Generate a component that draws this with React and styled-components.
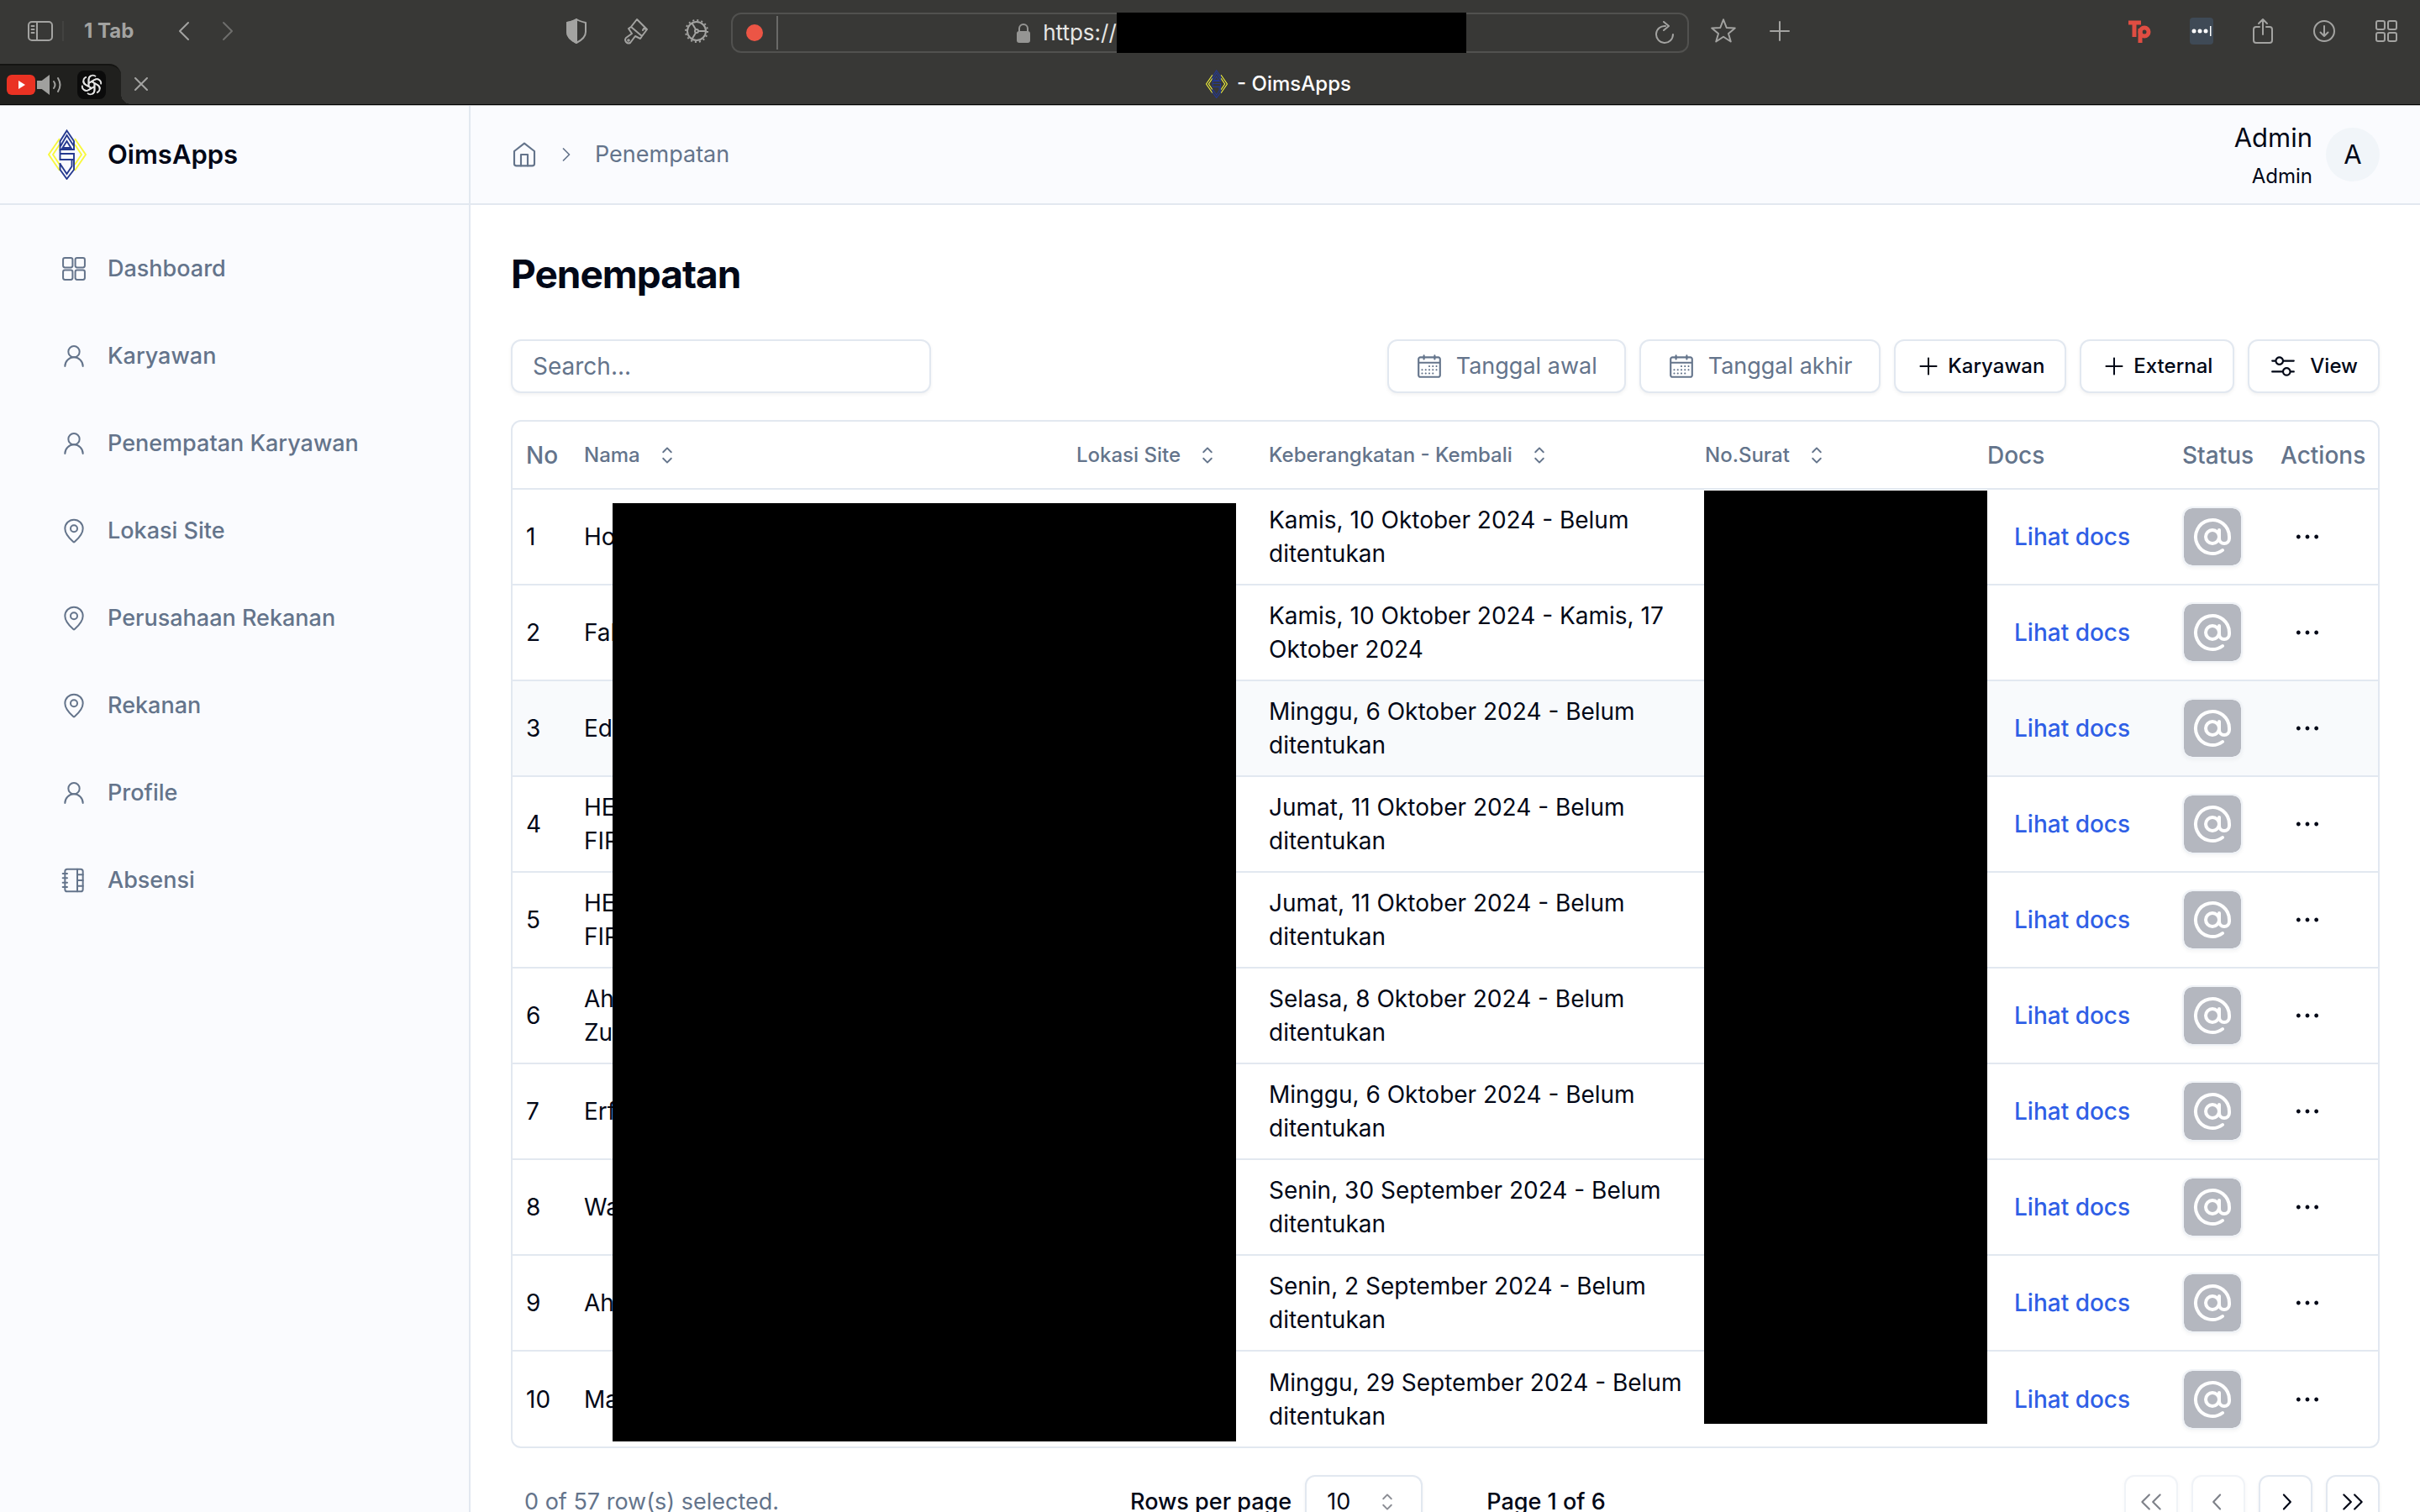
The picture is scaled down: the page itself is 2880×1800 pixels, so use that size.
import React from 'react';
import styled, { createGlobalStyle, css } from 'styled-components';
import { UserRound, MapPin, NotebookTabs, AtSign, ChevronRight } from 'lucide-react';
import {
  RxPlus, RxMixerHorizontal, RxCaretSort, RxCalendar, RxDotsHorizontal,
  RxChevronLeft, RxChevronRight, RxDoubleArrowLeft, RxDoubleArrowRight,
} from 'react-icons/rx';

const INK = '#020817';
const MUTED = '#64748b';
const LINE = '#e2e8f0';
const SURFACE = '#fafbfe';
const CHROME = '#383836';

const GlobalStyle = createGlobalStyle`
  *, *::before, *::after { box-sizing: border-box; }
  html, body { margin: 0; height: 100%; }
  #root { height: 100%; }
  body {
    overflow: hidden;
    background: #fff;
    color: ${INK};
    font: 400 28px/40px Inter, "Liberation Sans", sans-serif;
  }
  button, input, select { font: inherit; color: inherit; }
  button { cursor: pointer; }
  svg { display: block; flex: none; }
`;

const Screen = styled.div`
  display: flex;
  flex-direction: column;
  height: 100vh;
  overflow: hidden;
`;

/* Browser chrome */
const Chrome = styled.header`
  flex: none;
  background: ${CHROME};
  color: #a3a3a1;
  border-bottom: 1px solid #000;
`;
const Toolbar = styled.div`
  display: grid;
  grid-template-columns: 866px 1fr 870px;
  align-items: start;
  height: 76px;
`;
const ToolGroup = styled.div`
  display: flex;
  align-items: center;
  height: 74px;
  padding: ${(p) => p.$pad || '0'};
  gap: ${(p) => p.$gap || 0}px;
`;
const Spacer = styled.div`
  flex: 1;
`;
const ChromeButton = styled.button`
  display: flex;
  align-items: center;
  justify-content: center;
  padding: 0;
  border: 0;
  background: none;
  color: ${(p) => (p.$dim ? '#6e6e6c' : '#a3a3a1')};
`;
const TabCount = styled.span`
  margin-left: 10px;
  padding-left: 24px;
  border-left: 2px solid #424240;
  line-height: 24px;
  font-size: 24px;
  font-weight: 700;
`;
const AddressBar = styled.div`
  display: flex;
  align-items: center;
  height: 48px;
  margin: 15px 0 0 4px;
  padding: 0 14px 0 16px;
  border: 2px solid #51514f;
  border-radius: 12px;
`;
const RecordDot = styled.span`
  width: 20px;
  height: 20px;
  border-radius: 50%;
  background: #ec5545;
`;
const BarDivider = styled.span`
  width: 2px;
  height: 40px;
  margin-left: 16px;
  background: #6a6a68;
`;
const Address = styled.div`
  flex: 1;
  display: flex;
  align-items: center;
  justify-content: center;
  gap: 14px;
  height: 44px;
  padding-left: 60px;
  color: #e6e6e4;
  font-size: 26px;
`;
const Url = styled.div`
  display: flex;
  align-items: center;
`;
const UrlMask = styled.span`
  width: 416px;
  height: 48px;
  background: #000;
`;
const TabStrip = styled.div`
  display: flex;
  align-items: stretch;
  height: 48px;
`;
const PinnedTabs = styled.div`
  position: relative;
  display: flex;
  align-items: center;
  gap: 2px;
  width: 144px;
  padding-left: 8px;
  border-top: 2px solid #141412;
  border-radius: 0 14px 0 0;
  background: #20201e;
  &::after {
    content: '';
    position: absolute;
    left: 100%;
    bottom: 0;
    width: 12px;
    height: 12px;
    background: radial-gradient(circle at 100% 0, transparent 12px, #20201e 12px);
  }
`;
const GptTile = styled.span`
  display: grid;
  place-items: center;
  width: 34px;
  height: 34px;
  margin-left: 16px;
  border-radius: 8px;
  background: #0b0b0b;
  color: #e4e4e4;
`;
const ActiveTab = styled.div`
  flex: 1;
  display: grid;
  grid-template-columns: 48px 1fr 32px;
  align-items: center;
  color: #fff;
`;
const TabTitle = styled.div`
  display: flex;
  align-items: center;
  justify-content: center;
  gap: 8px;
  line-height: 32px;
  font-size: 24px;
  font-weight: 500;
`;

/* App shell */
const Shell = styled.div`
  flex: 1;
  display: grid;
  grid-template-columns: 560px minmax(0, 1fr);
  grid-template-rows: 118px minmax(0, 1fr);
  min-height: 0;
  border-top: 1px solid #b8b9ba;
`;
const Brand = styled.div`
  display: flex;
  align-items: center;
  gap: 24px;
  padding-left: 56px;
  border-right: 2px solid ${LINE};
  border-bottom: 2px solid ${LINE};
  background: ${SURFACE};
  font-size: 31px;
  font-weight: 600;
`;
const TopBar = styled.div`
  display: flex;
  align-items: center;
  justify-content: space-between;
  padding: 0 48px;
  border-bottom: 2px solid ${LINE};
  background: ${SURFACE};
`;
const Crumbs = styled.nav`
  display: flex;
  align-items: center;
  gap: 20px;
  color: ${MUTED};
  font-size: 27px;
`;
const CrumbLink = styled.a`
  color: inherit;
  text-decoration: none;
`;
const Account = styled.div`
  display: flex;
  align-items: center;
  gap: 16px;
`;
const AccountText = styled.div`
  display: flex;
  flex-direction: column;
  align-items: flex-end;
  gap: 8px;
`;
const AccountName = styled.span`
  font-size: 31px;
  line-height: 44px;
`;
const AccountRole = styled.span`
  font-size: 24px;
  line-height: 32px;
`;
const Avatar = styled.span`
  display: grid;
  place-items: center;
  width: 64px;
  height: 64px;
  border-radius: 50%;
  background: #f1f5f9;
  font-size: 31px;
`;
const Sidebar = styled.nav`
  display: flex;
  flex-direction: column;
  gap: 40px;
  padding: 44px 72px;
  border-right: 2px solid ${LINE};
  background: ${SURFACE};
`;
const SideLink = styled.a`
  display: flex;
  align-items: center;
  gap: 24px;
  height: 64px;
  color: ${MUTED};
  font-size: 27px;
  font-weight: 500;
  text-decoration: none;
`;

/* Page */
const Page = styled.main`
  min-width: 0;
  padding: 54px 48px 0;
`;
const Title = styled.h1`
  margin: 0 0 50px;
  font-size: 46px;
  line-height: 56px;
  font-weight: 700;
  letter-spacing: -1px;
`;
const Controls = styled.div`
  display: flex;
  justify-content: space-between;
  margin-bottom: 32px;
`;
const Actions = styled.div`
  display: flex;
  gap: 16px;
`;
const fieldBox = css`
  height: 64px;
  border: 2px solid ${LINE};
  border-radius: 12px;
  background: #fff;
  box-shadow: 0 2px 4px rgba(0, 0, 0, 0.05);
`;
const Search = styled.input`
  ${fieldBox}
  width: 500px;
  padding: 0 24px;
  outline: 0;
  &::placeholder { color: ${MUTED}; opacity: 1; }
`;
const ActionButton = styled.button`
  ${fieldBox}
  display: flex;
  align-items: center;
  gap: ${(p) => (p.$wide ? 16 : 8)}px;
  padding: 0 ${(p) => (p.$date ? 32 : 24)}px;
  color: ${(p) => (p.$date ? MUTED : INK)};
  font-size: ${(p) => (p.$date ? 27 : 24)}px;
  font-weight: ${(p) => (p.$date ? 400 : 500)};
`;
const TableFrame = styled.div`
  position: relative;
  overflow: hidden;
  border: 2px solid ${LINE};
  border-radius: 12px;
`;
const Table = styled.table`
  width: 100%;
  border-collapse: collapse;
  table-layout: fixed;
`;
const Col = styled.col`
  width: ${(p) => (p.$w ? `${p.$w}px` : 'auto')};
`;
const HeadCell = styled.th`
  height: 80px;
  padding: 0 0 0 16px;
  color: ${MUTED};
  font-weight: 500;
  text-align: left;
  white-space: nowrap;
`;
const SortButton = styled.button`
  display: flex;
  align-items: center;
  gap: 16px;
  padding: 0;
  border: 0;
  background: none;
  font-size: 24px;
  font-weight: 500;
`;
const Row = styled.tr`
  border-top: 2px solid ${LINE};
  background: ${(p) => (p.$hover ? '#f8fafc' : 'transparent')};
`;
const Cell = styled.td`
  height: 114px;
  padding: 0 0 0 16px;
`;
const NameText = styled.div`
  white-space: pre-line;
`;
const DocLink = styled.a`
  padding-left: 32px;
  color: #2f5fe6;
  font-weight: 500;
  text-decoration: none;
`;
const StatusBadge = styled.button`
  display: grid;
  place-items: center;
  width: 72px;
  height: 72px;
  padding: 0;
  border: 2px solid #f0f3f7;
  border-radius: 12px;
  background: #b4b7bf padding-box;
  color: #fff;
  box-shadow: 0 2px 4px rgba(0, 0, 0, 0.04);
`;
const RowMenu = styled.button`
  display: grid;
  place-items: center;
  width: 64px;
  height: 64px;
  padding: 0;
  border: 0;
  background: none;
`;
const Redaction = styled.div`
  position: absolute;
  top: ${(p) => p.$top}px;
  bottom: ${(p) => p.$bottom}px;
  left: ${(p) => p.$left}px;
  width: ${(p) => p.$width}px;
  background: #000;
`;

/* Pagination */
const Pager = styled.footer`
  display: grid;
  grid-template-columns: 737px 1fr auto;
  align-items: center;
  height: 64px;
  margin-top: 32px;
  font-size: 27px;
`;
const Selected = styled.span`
  padding-left: 16px;
  color: ${MUTED};
`;
const PageSize = styled.div`
  display: flex;
  align-items: center;
  gap: 16px;
  font-weight: 500;
`;
const SelectBox = styled.div`
  ${fieldBox}
  display: grid;
  grid-template-columns: 1fr auto;
  align-items: center;
  width: 140px;
  padding: 0 24px;
  font-weight: 400;
  svg, select { grid-row: 1; }
  svg { grid-column: 2; color: #8b8d94; pointer-events: none; }
  select {
    grid-column: 1 / 3;
    appearance: none;
    border: 0;
    padding: 0;
    background: none;
    outline: 0;
  }
`;
const PageInfo = styled.span`
  padding-left: 60px;
`;
const PageButtons = styled.div`
  display: flex;
  gap: 16px;
`;
const PageButton = styled.button`
  ${fieldBox}
  display: grid;
  place-items: center;
  width: 64px;
  padding: 0;
  &:disabled { opacity: 0.5; color: ${INK}; }
`;

const Line = ({ w = 32, h = w, box = '0 0 24 24', sw = 1.6, children }) => (
  <svg width={w} height={h} viewBox={box} fill="none" stroke="currentColor" strokeWidth={sw} strokeLinecap="round" strokeLinejoin="round">
    {children}
  </svg>
);

const Logo = ({ width, height }) => (
  <svg width={width} height={height} viewBox="0 0 46 60" fill="none" strokeWidth="1.900">
    <g stroke="#f8f83c">
      <path d="M14 11 1 30l13 19M14 18 6 30l8 12M32 11l13 19-13 19M32 18l8 12-8 12" />
    </g>
    <g stroke="#25398f">
      <path d="M22.500 1.500 14.500 14v10H31V14zM15 20l7.500-13L31 20M17.500 22l5-8 5 8z" />
      <path d="M14.500 24v5H31v19l-8.500 11-8-11v-8M14.500 29v7H31M14.500 41l8 12 6-9v-7" />
    </g>
  </svg>
);

const House = () => (
  <Line sw={1.6}>
    <path d="m3 9 9-7 9 7v11a2 2 0 0 1-2 2H5a2 2 0 0 1-2-2z" />
    <path d="M9 22V12h6v10" />
  </Line>
);

const Grid = ({ size, strokeWidth }) => (
  <Line w={size} sw={strokeWidth}>
    <rect x="2.300" y="2.300" width="8.500" height="8.500" rx="1.600" />
    <rect x="13.200" y="2.300" width="8.500" height="8.500" rx="1.600" />
    <rect x="2.300" y="13.200" width="8.500" height="8.500" rx="1.600" />
    <rect x="13.200" y="13.200" width="8.500" height="8.500" rx="1.600" />
  </Line>
);

const MENU = [
  ['Dashboard', Grid], ['Karyawan', UserRound], ['Penempatan Karyawan', UserRound],
  ['Lokasi Site', MapPin], ['Perusahaan Rekanan', MapPin], ['Rekanan', MapPin],
  ['Profile', UserRound], ['Absensi', NotebookTabs],
];

const ROWS = [
  ['Ho', 'Kamis, 10 Oktober 2024 - Belum ditentukan'],
  ['Fah', 'Kamis, 10 Oktober 2024 - Kamis, 17 Oktober 2024'],
  ['Ed', 'Minggu, 6 Oktober 2024 - Belum ditentukan'],
  ['HE\nFIR', 'Jumat, 11 Oktober 2024 - Belum ditentukan'],
  ['HE\nFIR', 'Jumat, 11 Oktober 2024 - Belum ditentukan'],
  ['Ah\nZu', 'Selasa, 8 Oktober 2024 - Belum ditentukan'],
  ['Erf', 'Minggu, 6 Oktober 2024 - Belum ditentukan'],
  ['Wa', 'Senin, 30 September 2024 - Belum ditentukan'],
  ['Ah', 'Senin, 2 September 2024 - Belum ditentukan'],
  ['Ma', 'Minggu, 29 September 2024 - Belum ditentukan'],
];

const SortHead = ({ children }) => (
  <HeadCell>
    <SortButton>{children}<RxCaretSort size={32} /></SortButton>
  </HeadCell>
);

const BrowserChrome = () => (
  <Chrome>
    <Toolbar>
      <ToolGroup $pad="0 22px 0 32px">
        <ChromeButton aria-label="Sidebar">
          <Line w={32} h={26} box="0 0 32 26" sw={2}>
            <rect x="2" y="2" width="28" height="22" rx="4" /><path d="M12 2v22M5.500 7h3M5.500 11h3M5.500 15h3" />
          </Line>
        </ChromeButton>
        <TabCount>1 Tab</TabCount>
        <ToolGroup $pad="0 0 0 52px" $gap={36}>
          <ChromeButton aria-label="Back"><Line w={16} h={24} box="0 0 16 24" sw={2}><path d="M13 2 3 12l10 10" /></Line></ChromeButton>
          <ChromeButton aria-label="Forward" $dim><Line w={16} h={24} box="0 0 16 24" sw={2}><path d="m3 2 10 10L3 22" /></Line></ChromeButton>
        </ToolGroup>
        <Spacer />
        <ToolGroup $gap={42}>
          <ChromeButton aria-label="Privacy">
            <Line w={28} h={32} box="0 0 28 32" sw={2}>
              <path d="M14 2c3 2 7 3 11 4v11c0 6-5 10-11 13C8 27 3 23 3 17V6c4-1 8-2 11-4z" />
              <path d="M14 2v28C8 27 3 23 3 17V6c4-1 8-2 11-4z" fill="currentColor" />
            </Line>
          </ChromeButton>
          <ChromeButton aria-label="Cleaner">
            <Line w={30} h={32} box="0 0 30 32" sw={2}>
              <path d="M16 2 28 14l-6 8L9 11zM28 14l-4-1-1 2M9 11l-3 2 4 6-7 5a4 4 0 0 0 5 6l6-8 6 3 2-3" /><circle cx="6" cy="27" r=".8" />
            </Line>
          </ChromeButton>
          <ChromeButton aria-label="Settings">
            <Line w={30} h={30} box="0 0 30 30" sw={2}>
              <circle cx="15" cy="15" r="11" /><circle cx="15" cy="15" r="13" strokeDasharray="2 3.100" strokeLinecap="butt" />
              <circle cx="15" cy="15" r="2" /><path d="M17 15h9M14 13 9.500 5.500M14 17l-4.500 7.500" />
            </Line>
          </ChromeButton>
        </ToolGroup>
      </ToolGroup>
      <AddressBar>
        <RecordDot /><BarDivider />
        <Address>
          <svg width="18" height="24" viewBox="0 0 18 24" fill="none">
            <path d="M4 11V7a5 5 0 0 1 10 0v4" stroke="#959593" strokeWidth="2" /><rect x="1" y="10" width="16" height="14" rx="3" fill="#959593" />
          </svg>
          <Url>https://<UrlMask /></Url>
        </Address>
        <ChromeButton aria-label="Reload">
          <Line w={26} h={28} box="0 0 26 28" sw={2}><path d="M14 6a10 10 0 1 0 9 10M12 1l6 5-6 5" /></Line>
        </ChromeButton>
      </AddressBar>
      <ToolGroup $pad="0 26px">
        <ToolGroup $gap={40}>
          <ChromeButton aria-label="Bookmark"><Line w={30} sw={1.6}><path d="m12 1 3 7.800 8 .4-6.200 5.200L19 22l-7-4.600L5 22l2.200-7.600L1 9.200l8-.4z" /></Line></ChromeButton>
          <ChromeButton aria-label="New tab"><Line w={24} sw={2}><path d="M12 1v22M1 12h22" /></Line></ChromeButton>
        </ToolGroup>
        <Spacer />
        <ToolGroup $gap={46}>
          <ChromeButton aria-label="Tp">
            <svg width="28" height="28" viewBox="0 0 28 28" fill="none" stroke="#e04d42" strokeWidth="5">
              <path d="M1 4h15M8 4v17M15 11v17" /><circle cx="20" cy="15" r="5" />
            </svg>
          </ChromeButton>
          <ChromeButton aria-label="Passwords">
            <svg width="28" height="32" viewBox="0 0 28 32" fill="#fff">
              <rect width="28" height="32" rx="4" fill="#3f4a56" /><circle cx="5" cy="16" r="2.500" /><circle cx="12" cy="16" r="2.500" /><circle cx="19" cy="16" r="2.500" /><path d="M24 10h1.500v12H24z" />
            </svg>
          </ChromeButton>
          <ChromeButton aria-label="Share"><Line w={26} h={32} box="0 0 26 32" sw={2}><path d="M9 11H5a3 3 0 0 0-3 3v13a3 3 0 0 0 3 3h16a3 3 0 0 0 3-3V14a3 3 0 0 0-3-3h-4M13 20V2M8 7l5-5 5 5" /></Line></ChromeButton>
          <ChromeButton aria-label="Downloads"><Line w={28} box="0 0 28 28" sw={2}><circle cx="14" cy="14" r="12" /><path d="M14 8v12M9.500 15.500 14 20l4.500-4.500" /></Line></ChromeButton>
          <ChromeButton aria-label="Tabs">
            <Line w={28} box="0 0 28 28" sw={2}><rect x="2" y="2" width="10" height="10" rx="2" /><rect x="16" y="2" width="10" height="10" rx="2" /><rect x="2" y="16" width="10" height="10" rx="2" /><rect x="16" y="16" width="10" height="10" rx="2" /></Line>
          </ChromeButton>
        </ToolGroup>
      </ToolGroup>
    </Toolbar>
    <TabStrip>
      <PinnedTabs>
        <svg width="34" height="24" viewBox="0 0 34 24"><rect width="34" height="24" rx="6" fill="#ea3223" /><path d="m14 7 8 5-8 5z" fill="#fff" /></svg>
        <svg width="30" height="24" viewBox="0 0 30 24" fill="none" stroke="#a0a09e" strokeWidth="2" strokeLinecap="round"><path d="M1 8h5l8-6v20l-8-6H1z" fill="#a0a09e" /><path d="M20 8q3 4 0 8M25 4q5 8 0 16" /></svg>
        <GptTile>
          <svg width="26" height="26" viewBox="0 0 26 26" fill="none" stroke="currentColor" strokeWidth="1.800" strokeLinejoin="round">
            {[0, 60, 120, 180, 240, 300].map((a) => (
              <path key={a} transform={`rotate(${a} 13 13)`} d="M9.500 15V6.500a5 5 0 0 1 8.500-3.400M9.500 11l7.300-4.200a5 5 0 0 1 5.200.2" />
            ))}
          </svg>
        </GptTile>
      </PinnedTabs>
      <ActiveTab>
        <ChromeButton aria-label="Close tab"><Line w={16} box="0 0 16 16" sw={2}><path d="m1 1 14 14M15 1 1 15" /></Line></ChromeButton>
        <TabTitle><Logo width={32} height={34} />- OimsApps</TabTitle>
      </ActiveTab>
    </TabStrip>
  </Chrome>
);

export default function App() {
  return (
    <Screen>
      <GlobalStyle />
      <BrowserChrome />
      <Shell>
        <Brand><Logo width={48} height={60} />OimsApps</Brand>
        <TopBar>
          <Crumbs aria-label="Breadcrumb">
            <CrumbLink href="#" aria-label="Home"><House /></CrumbLink>
            <ChevronRight size={28} strokeWidth={1.5} />
            <CrumbLink href="#">Penempatan</CrumbLink>
          </Crumbs>
          <Account>
            <AccountText><AccountName>Admin</AccountName><AccountRole>Admin</AccountRole></AccountText>
            <Avatar>A</Avatar>
          </Account>
        </TopBar>
        <Sidebar>
          {MENU.map(([label, Icon]) => (
            <SideLink href="#" key={label}><Icon size={32} strokeWidth={1.5} />{label}</SideLink>
          ))}
        </Sidebar>
        <Page>
          <Title>Penempatan</Title>
          <Controls>
            <Search aria-label="Search" placeholder="Search..." />
            <Actions>
              <ActionButton $date $wide><RxCalendar size={32} />Tanggal awal</ActionButton>
              <ActionButton $date $wide><RxCalendar size={32} />Tanggal akhir</ActionButton>
              <ActionButton><RxPlus size={30} />Karyawan</ActionButton>
              <ActionButton><RxPlus size={30} />External</ActionButton>
              <ActionButton $wide><RxMixerHorizontal size={32} />View</ActionButton>
            </Actions>
          </Controls>
          <TableFrame>
            <Table>
              <colgroup>
                <Col $w={69} /><Col $w={586} /><Col $w={229} /><Col $w={519} /><Col $w={336} /><Col /><Col $w={117} /><Col $w={132} />
              </colgroup>
              <thead>
                <tr>
                  <HeadCell>No</HeadCell>
                  <SortHead>Nama</SortHead>
                  <SortHead>Lokasi Site</SortHead>
                  <SortHead>Keberangkatan - Kembali</SortHead>
                  <SortHead>No.Surat</SortHead>
                  <HeadCell>Docs</HeadCell>
                  <HeadCell>Status</HeadCell>
                  <HeadCell>Actions</HeadCell>
                </tr>
              </thead>
              <tbody>
                {ROWS.map(([name, period], i) => (
                  <Row key={i} $hover={i === 2}>
                    <Cell>{i + 1}</Cell>
                    <Cell><NameText>{name}</NameText></Cell>
                    <Cell />
                    <Cell>{period}</Cell>
                    <Cell />
                    <Cell><DocLink href="#">Lihat docs</DocLink></Cell>
                    <Cell><StatusBadge aria-label="Status"><AtSign size={48} strokeWidth={2} /></StatusBadge></Cell>
                    <Cell><RowMenu aria-label="Row actions"><RxDotsHorizontal size={32} /></RowMenu></Cell>
                  </Row>
                ))}
              </tbody>
            </Table>
            <Redaction $top={97} $bottom={6} $left={119} $width={742} />
            <Redaction $top={82} $bottom={27} $left={1418} $width={337} />
          </TableFrame>
          <Pager>
            <Selected>0 of 57 row(s) selected.</Selected>
            <PageSize>
              <label htmlFor="page-size">Rows per page</label>
              <SelectBox>
                <select id="page-size" defaultValue="10"><option>10</option><option>20</option></select>
                <RxCaretSort size={32} />
              </SelectBox>
              <PageInfo>Page 1 of 6</PageInfo>
            </PageSize>
            <PageButtons>
              <PageButton disabled aria-label="First page"><RxDoubleArrowLeft size={32} /></PageButton>
              <PageButton disabled aria-label="Previous page"><RxChevronLeft size={32} /></PageButton>
              <PageButton aria-label="Next page"><RxChevronRight size={32} /></PageButton>
              <PageButton aria-label="Last page"><RxDoubleArrowRight size={32} /></PageButton>
            </PageButtons>
          </Pager>
        </Page>
      </Shell>
    </Screen>
  );
}
